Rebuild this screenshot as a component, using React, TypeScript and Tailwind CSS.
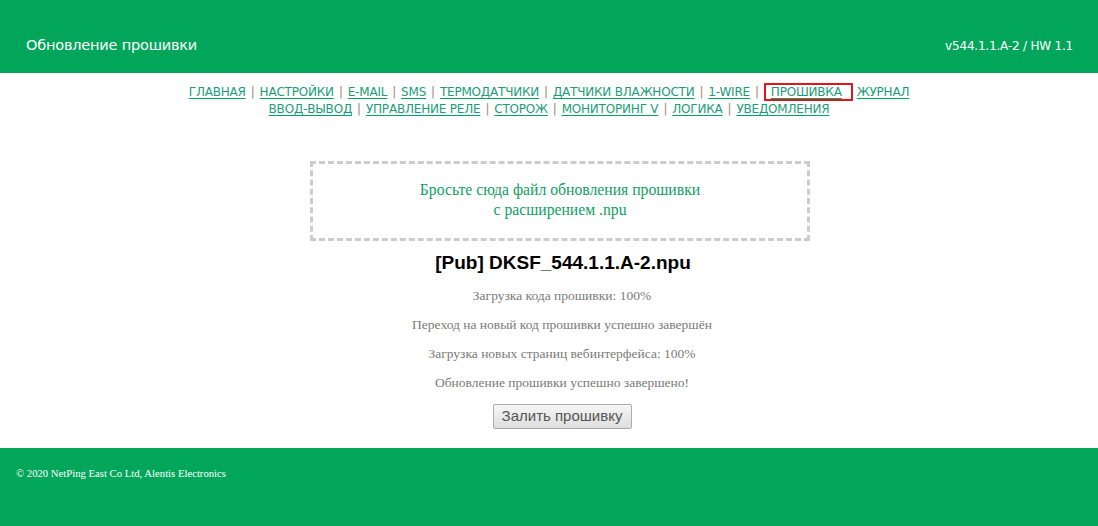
const NAV_1 = [
  "ГЛАВНАЯ",
  "НАСТРОЙКИ",
  "E-MAIL",
  "SMS",
  "ТЕРМОДАТЧИКИ",
  "ДАТЧИКИ ВЛАЖНОСТИ",
  "1-WIRE",
  "ПРОШИВКА",
  "ЖУРНАЛ",
];
const NAV_2 = ["ВВОД-ВЫВОД", "УПРАВЛЕНИЕ РЕЛЕ", "СТОРОЖ", "МОНИТОРИНГ V", "ЛОГИКА", "УВЕДОМЛЕНИЯ"];

const STATUS = [
  "Загрузка кода прошивки: 100%",
  "Переход на новый код прошивки успешно завершён",
  "Загрузка новых страниц вебинтерфейса: 100%",
  "Обновление прошивки успешно завершено!",
];

function NavRow({ items, active }: { items: string[]; active?: string }) {
  return (
    <div className="flex justify-center items-center">
      {items.map((item, i) => {
        const afterActive = i > 0 && items[i - 1] === active;
        return (
          <span key={item} className="flex items-center">
            {i > 0 && !afterActive && <span className="mx-[5px] text-[#9a8a70]">|</span>}
            {item === active ? (
              <span className="mr-[4px] border-2 border-[#e0161c] pl-[5px] pr-[9px] leading-[14px]">
                <a href="#" className="text-[#1a9d78] underline decoration-[#00a65a] underline-offset-2">
                  {item}
                </a>
              </span>
            ) : (
              <a href="#" className="text-[#1a9d78] underline decoration-[#00a65a] underline-offset-2">
                {item}
              </a>
            )}
          </span>
        );
      })}
    </div>
  );
}

export default function App() {
  return (
    <div className="min-h-[526px] bg-white font-['DejaVu_Sans',sans-serif]">
      <header className="h-[73px] bg-[#02a65b] flex items-center justify-between pt-[18px] pl-[26px] pr-[25px] text-white">
        <h1 className="text-[14.5px] tracking-[-0.2px]">Обновление прошивки</h1>
        <span className="text-[12px] tracking-[-0.2px]">v544.1.1.A-2 / HW 1.1</span>
      </header>

      <nav className="pt-[10px] text-[12px] leading-[16px] tracking-[-0.2px]">
        <NavRow items={NAV_1} active="ПРОШИВКА" />
        <NavRow items={NAV_2} />
      </nav>

      <main className="flex flex-col items-center pt-[44px] pl-[22px]">
        <div className="w-[500px] h-[80px] pb-[2px] border-[3px] border-dashed border-[#cccccc] flex flex-col items-center justify-center font-['Liberation_Serif',serif] text-[15.7px] leading-[20px] text-[#0fa064]">
          <span>Бросьте сюда файл обновления прошивки</span>
          <span>с расширением .npu</span>
        </div>

        <h2 className="mt-[8px] pl-[6px] font-['Liberation_Sans',sans-serif] font-bold text-[19px] leading-[28px] text-black">
          [Pub] DKSF_544.1.1.A-2.npu
        </h2>

        <div className="mt-[11px] pl-[4px] flex flex-col items-center gap-[13px] font-['Liberation_Serif',serif] text-[13.5px] leading-[16px] text-[#7a7a7a]">
          {STATUS.map((s) => (
            <p key={s}>{s}</p>
          ))}
        </div>

        <button className="mt-[13px] ml-[4px] w-[139px] h-[25px] border border-[#adadad] rounded-[2px] bg-gradient-to-b from-[#f6f6f6] to-[#dedede] font-['Liberation_Sans',sans-serif] text-[15px] text-[#555555]">
          Залить прошивку
        </button>
      </main>

      <footer className="mt-[19px] h-[78px] bg-[#02a65b] pl-[16px] pt-[17px] font-['Liberation_Serif',serif] text-[10.7px] text-white">
        © 2020 NetPing East Co Ltd, Alentis Electronics
      </footer>
    </div>
  );
}
